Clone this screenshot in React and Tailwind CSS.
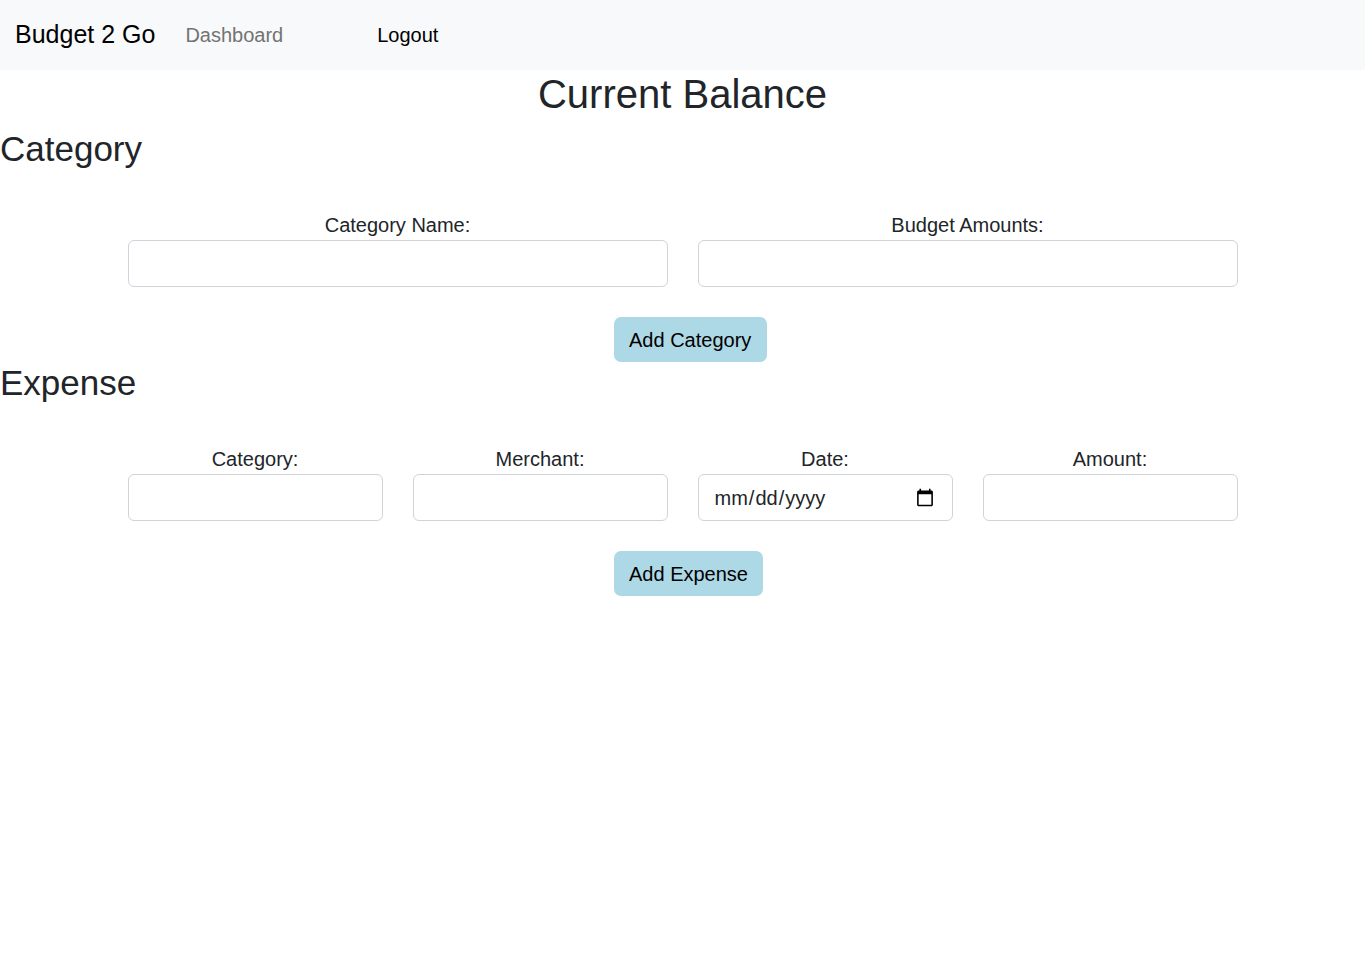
import React from "react";

const font = { fontFamily: '"Liberation Sans", Arial, sans-serif' };

function Field({ label, type = "text" }) {
  return (
    <div className="flex flex-col items-center">
      <label className="text-[20px] leading-[30px] text-[#212529]">{label}</label>
      <input
        type={type}
        className="w-full h-[47px] px-[15px] text-[20px] leading-[30px] text-[#212529] bg-white border border-[#ced4da] rounded-[6px] outline-none"
      />
    </div>
  );
}

export default function App() {
  return (
    <div className="min-h-[961px] bg-white text-[#212529]" style={font}>
      {/* Navbar */}
      <nav className="h-[70px] bg-[#f8f9fa] flex items-center px-[15px]">
        <span className="text-[25px] leading-[37.5px] text-black mr-[20px]">Budget 2 Go</span>
        <a className="px-[10px] text-[20px] leading-[30px] text-[#737373]">Dashboard</a>
        <a className="ml-[74px] px-[10px] text-[20px] leading-[30px] text-black">Logout</a>
      </nav>

      <h2 className="text-center text-[40px] leading-[48px] mb-[10px]">Current Balance</h2>

      {/* Category */}
      <h3 className="text-[35px] leading-[42px] mb-[10px]">Category</h3>
      <div className="w-[1110px] mx-auto pt-[30px]">
        <div className="grid grid-cols-2 gap-x-[30px]">
          <Field label="Category Name:" />
          <Field label="Budget Amounts:" />
        </div>
        <div className="mt-[30px] pl-[486px]">
          <button className="bg-[#add8e6] text-black text-[20px] leading-[30px] px-[15.5px] py-[7.5px] rounded-[7px]">
            Add Category
          </button>
        </div>
      </div>

      {/* Expense */}
      <h3 className="text-[35px] leading-[42px] mb-[10px]">Expense</h3>
      <div className="w-[1110px] mx-auto pt-[30px]">
        <div className="grid grid-cols-4 gap-x-[30px]">
          <Field label="Category:" />
          <Field label="Merchant:" />
          <Field label="Date:" type="date" />
          <Field label="Amount:" />
        </div>
        <div className="mt-[30px] pl-[486px]">
          <button className="bg-[#add8e6] text-black text-[20px] leading-[30px] px-[15.5px] py-[7.5px] rounded-[7px]">
            Add Expense
          </button>
        </div>
      </div>
    </div>
  );
}
